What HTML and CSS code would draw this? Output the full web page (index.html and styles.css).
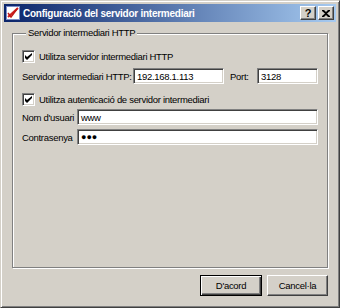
FILE: index.html
```html
<!DOCTYPE html>
<html lang="ca">
<head>
    <meta charset="UTF-8">
    <title>Configuració del servidor intermediari</title>
    <link rel="stylesheet" href="styles.css">
</head>
<body>
    <div class="window">
        <div class="titlebar">
            <svg class="appicon" width="16" height="16" viewBox="0 0 16 16">
                <rect x="1.5" y="1.5" width="13" height="13" fill="#fff" stroke="#7a8cc8"/>
                <path d="M3 12 L13 3" stroke="#d02020" stroke-width="2"/>
                <path d="M3 8 L6 12 L12 4" stroke="#c01818" stroke-width="1.5" fill="none"/>
            </svg>
            <div class="title">Configuració del servidor intermediari</div>
            <div class="capbtn">?</div>
            <div class="capbtn close">
                <svg width="8" height="7" viewBox="0 0 8 7">
                    <path d="M0 0h2l2 2 2-2h2v1L5 3.5 8 6v1H6L4 5 2 7H0V6l3-2.5L0 1z" fill="#000"/>
                </svg>
            </div>
        </div>

        <div class="client">
            <fieldset class="group">
                <legend>Servidor intermediari HTTP</legend>

                <label class="check">
                    <span class="box"><svg width="7" height="7" viewBox="0 0 7 7"><path d="M0 2v3l2 2 5-5V0L2 4z" fill="#000"/></svg></span>
                    Utilitza servidor intermediari HTTP
                </label>

                <div class="row">
                    <span class="lbl host-lbl">Servidor intermediari HTTP:</span>
                    <div class="field host">192.168.1.113</div>
                    <span class="lbl port">Port:</span>
                    <div class="field portin">3128</div>
                </div>

                <label class="check second">
                    <span class="box"><svg width="7" height="7" viewBox="0 0 7 7"><path d="M0 2v3l2 2 5-5V0L2 4z" fill="#000"/></svg></span>
                    Utilitza autenticació de servidor intermediari
                </label>

                <div class="row user">
                    <span class="lbl short">Nom d'usuari</span>
                    <div class="field wide">www</div>
                </div>
                <div class="row pass">
                    <span class="lbl short">Contrasenya</span>
                    <div class="field wide dots">&#9679;&#9679;&#9679;</div>
                </div>
            </fieldset>

            <div class="buttons">
                <div class="btn default">D'acord</div>
                <div class="btn">Cancel·la</div>
            </div>
        </div>
    </div>
</body>
</html>
```

FILE: styles.css
```css
* {
    margin: 0;
    padding: 0;
    box-sizing: border-box;
}
body {
    background: #d4d0c8;
    font-family: "Liberation Sans", Arial, sans-serif;
    font-size: 9.5px;
    letter-spacing: -0.3px;
    color: #000;
}
.window {
    width: 340px;
    height: 308px;
    display: flex;
    flex-direction: column;
    background: #d4d0c8;
    border: 1px solid;
    border-color: #d4d0c8 #404040 #404040 #d4d0c8;
    box-shadow: inset 1px 1px 0 #fff, inset -1px -1px 0 #808080;
    padding: 3px;
}
.titlebar {
    height: 18px;
    display: flex;
    align-items: center;
    padding: 0 2px 0 1px;
    background: linear-gradient(to right, #0a246a, #a6caf0);
}
.appicon {
    flex: none;
}
.title {
    flex: 1;
    color: #fff;
    font-weight: bold;
    font-size: 10px;
    letter-spacing: -0.25px;
    padding-left: 2px;
    white-space: nowrap;
}
.capbtn {
    width: 16px;
    height: 14px;
    background: #d4d0c8;
    border: 1px solid;
    border-color: #fff #404040 #404040 #fff;
    box-shadow: inset -1px -1px 0 #808080;
    display: flex;
    align-items: center;
    justify-content: center;
    font-weight: bold;
    font-size: 11px;
    letter-spacing: 0;
    line-height: 1;
}
.capbtn.close {
    margin-left: 2px;
}
.client {
    flex: 1;
    display: flex;
    flex-direction: column;
    padding: 5px 8px 8px 8px;
}
.group {
    flex: 1;
    border: 1px solid #808080;
    box-shadow: inset 1px 1px 0 #fff, 1px 1px 0 #fff;
    padding: 8px 9px 0 9px;
    min-width: 0;
}
.group legend {
    padding: 0 2px;
    margin-left: 4px;
    background: #d4d0c8;
    line-height: 12px;
}
.lbl, .check {
    white-space: nowrap;
}
.check {
    display: flex;
    align-items: center;
    gap: 4px;
    height: 13px;
    margin-top: 3px;
}
.check.second {
    margin-top: 9px;
}
.box {
    width: 13px;
    height: 13px;
    background: #fff;
    border: 1px solid;
    border-color: #808080 #fff #fff #808080;
    box-shadow: inset 1px 1px 0 #404040, inset -1px -1px 0 #d4d0c8;
    display: flex;
    align-items: center;
    justify-content: center;
}
.row {
    display: flex;
    align-items: center;
    margin-top: 5px;
}
.row.user {
    margin-top: 3px;
}
.row.pass {
    margin-top: 4px;
}
.lbl {
    flex: none;
}
.host-lbl {
    width: 111px;
}
.short {
    width: 55px;
}
.field {
    height: 16px;
    background: #fff;
    border: 1px solid;
    border-color: #808080 #fff #fff #808080;
    box-shadow: inset 1px 1px 0 #404040, inset -1px -1px 0 #d4d0c8;
    padding: 0 3px;
    display: flex;
    align-items: center;
    white-space: nowrap;
}
.host {
    width: 91px;
}
.port {
    width: 33px;
    padding-left: 6px;
}
.portin {
    flex: 1;
}
.wide {
    flex: 1;
}
.dots {
    font-size: 9px;
    letter-spacing: 0;
}
.buttons {
    display: flex;
    justify-content: flex-end;
    gap: 5px;
    margin-top: 7px;
}
.btn {
    width: 61px;
    height: 21px;
    display: flex;
    align-items: center;
    justify-content: center;
    background: #d4d0c8;
    border: 1px solid;
    border-color: #fff #404040 #404040 #fff;
    box-shadow: inset -1px -1px 0 #808080;
}
.btn.default {
    width: 62px;
    border: 1px solid #000;
    box-shadow: inset 1px 1px 0 #fff, inset -1px -1px 0 #404040, inset -2px -2px 0 #808080;
}
```
